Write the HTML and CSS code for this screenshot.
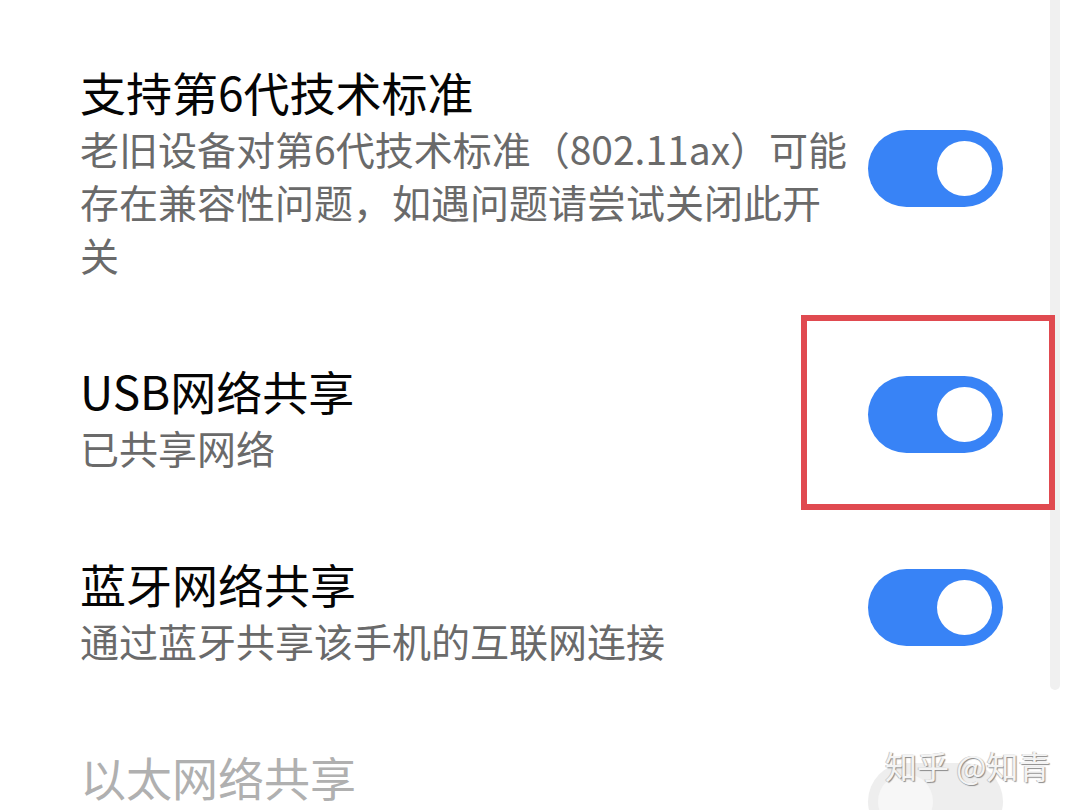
FILE: index.html
```html
<!DOCTYPE html>
<html lang="zh-CN">
<head>
<meta charset="utf-8">
<link rel="stylesheet" href="styles.css">
</head>
<body>
<div class="screen">
  <div class="list">
    <div class="item">
      <div class="text">
        <div class="title">支持第6代技术标准</div>
        <div class="desc">老旧设备对第6代技术标准（802.11ax）可能存在兼容性问题，如遇问题请尝试关闭此开关</div>
      </div>
      <div class="toggle on"><span class="knob"></span></div>
    </div>
    <div class="item">
      <div class="text">
        <div class="title">USB网络共享</div>
        <div class="desc">已共享网络</div>
      </div>
      <div class="toggle on"><span class="knob"></span><span class="highlight"></span></div>
    </div>
    <div class="item">
      <div class="text">
        <div class="title">蓝牙网络共享</div>
        <div class="desc">通过蓝牙共享该手机的互联网连接</div>
      </div>
      <div class="toggle on"><span class="knob"></span></div>
    </div>
    <div class="item disabled">
      <div class="text">
        <div class="title">以太网络共享</div>
      </div>
      <div class="toggle off"><span class="knob"></span></div>
    </div>
  </div>
  <div class="scrollbar"></div>
  <div class="watermark">知乎 @知青</div>
</div>
</body>
</html>
```

FILE: styles.css
```css
* { box-sizing: border-box; }
html, body {
  margin: 0;
  padding: 0;
  background: #ffffff;
}
body {
  font-family: "Noto Sans CJK SC", "Noto Sans", sans-serif;
}
.screen {
  position: relative;
  width: 1080px;
  height: 810px;
  overflow: hidden;
  background: #ffffff;
}
.list {
  display: flex;
  flex-direction: column;
  padding-top: 21px;
}
.item {
  display: flex;
  align-items: center;
  padding: 39px 77px 39px 80px;
}
.item.disabled {
  align-items: flex-start;
}
.text {
  flex: 1;
  min-width: 0;
}
.title {
  font-size: 46px;
  line-height: 62px;
  color: #050505;
  white-space: nowrap;
}
.desc {
  font-size: 39px;
  line-height: 53px;
  color: #6a6a6a;
  max-width: 776px;
}
.disabled .title { color: #b0b0b0; }
.toggle {
  position: relative;
  flex: none;
  width: 135px;
  height: 77px;
  border-radius: 39px;
  margin-top: -4px;
}
.disabled .toggle { margin-top: 18px; }
.toggle.on { background: #3883f6; }
.toggle.off { background: #eeeeee; }
.knob {
  position: absolute;
  top: 11px;
  width: 55px;
  height: 55px;
  border-radius: 50%;
  background: #ffffff;
}
.toggle.on .knob { right: 11px; }
.toggle.off .knob { left: 10px; background: #f7f7f7; }
.highlight {
  position: absolute;
  z-index: 2;
  left: -67px;
  top: -61px;
  right: -52px;
  bottom: -57px;
  border: 6px solid #e04a50;
}
.scrollbar {
  position: absolute;
  z-index: 1;
  left: 1050px;
  top: 0;
  width: 10px;
  height: 690px;
  background: #f0f0f0;
  border-radius: 0 0 5px 5px;
}
.watermark {
  position: absolute;
  z-index: 3;
  left: 885px;
  top: 743px;
  font-size: 32px;
  line-height: 44px;
  color: #f4f4f4;
  text-shadow: 1px 1px 1px #8a8a8a, -1px 0 0 #c8c8c8;
  white-space: nowrap;
}
```
